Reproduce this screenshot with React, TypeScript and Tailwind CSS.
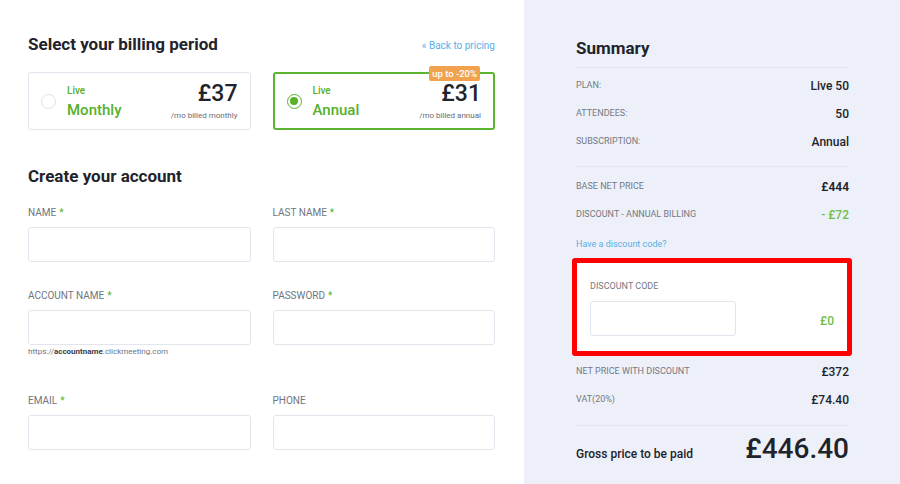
import React from 'react';

const green = 'text-[#56b02a]';

function Radio({ checked }: { checked?: boolean }) {
  return checked ? (
    <div className="w-[15px] h-[15px] rounded-full border-[1.5px] border-[#56b02a] flex items-center justify-center shrink-0">
      <div className="w-[8px] h-[8px] rounded-full bg-[#56b02a]" />
    </div>
  ) : (
    <div className="w-[15px] h-[15px] rounded-full border border-[#dfe2ea] shrink-0" />
  );
}

function PlanCard({ title, price, note, active }: { title: string; price: string; note: string; active?: boolean }) {
  return (
    <div
      className={`relative h-[58px] rounded-[3px] flex items-center pl-[12px] pr-[12px] ${
        active ? 'border-2 border-[#5bb530] pl-[11px] pr-[11px]' : 'border border-[#e3e5ee]'
      }`}
    >
      {active && (
        <div className="absolute top-[-8px] right-[13px] h-[15px] px-[3px] rounded-[2px] bg-[#f0a24e] text-white text-[9.5px] font-medium leading-[15px]">
          up to -20%
        </div>
      )}
      <Radio checked={active} />
      <div className="ml-[11px] pt-[2px] flex flex-col">
        <span className={`text-[10px] font-medium leading-[12px] ${green}`}>Live</span>
        <span className={`text-[15px] font-medium leading-[18px] mt-[4px] ${green}`}>{title}</span>
      </div>
      <div className="ml-auto flex flex-col items-end">
        <span className="text-[23px] font-medium leading-[26px] text-[#1f232b]">{price}</span>
        <span className="text-[8px] leading-[10px] text-[#666c77] mt-[4px]">{note}</span>
      </div>
    </div>
  );
}

function Field({ label, required, hint }: { label: string; required?: boolean; hint?: boolean }) {
  return (
    <div className="flex flex-col">
      <label className="text-[10px] leading-[14px] text-[#6f7580] uppercase">
        {label}
        {required && <span className="text-[#56b02a] ml-[3px]">*</span>}
      </label>
      <div className="mt-[7px] h-[35px] rounded-[3px] border border-[#e3e5ee] bg-white" />
      {hint && (
        <div className="h-[22px] pt-[2px] text-[8px] leading-[10px] text-[#6b7486]">
          https://<span className="font-bold text-[#3b404a]">accountname</span>.clickmeeting.com
        </div>
      )}
    </div>
  );
}

function Row({ label, value, valueClass }: { label: string; value: string; valueClass?: string }) {
  return (
    <div className="h-[28px] flex items-center justify-between">
      <span className="text-[9px] text-[#737985] uppercase">{label}</span>
      <span className={`text-[12px] font-medium ${valueClass ?? 'text-[#1f232b]'}`}>{value}</span>
    </div>
  );
}

export default function App() {
  return (
    <div className="w-[900px] h-[484px] flex bg-white overflow-hidden" style={{ fontFamily: 'Roboto, "Liberation Sans", sans-serif' }}>
      <div className="w-[524px] pl-[28px] pr-[29px] pt-[34px]">
        <div className="h-[22px] flex items-center justify-between">
          <h1 className="text-[17px] font-bold text-[#1f232b]">Select your billing period</h1>
          <a className="text-[10px] text-[#5aaee8]">« Back to pricing</a>
        </div>
        <div className="mt-[16px] grid grid-cols-2 gap-x-[22px]">
          <PlanCard title="Monthly" price="£37" note="/mo billed monthly" />
          <PlanCard title="Annual" price="£31" note="/mo billed annual" active />
        </div>
        <h2 className="mt-[36px] h-[22px] flex items-center text-[17px] font-bold text-[#1f232b]">Create your account</h2>
        <div className="mt-[18px] grid grid-cols-2 gap-x-[22px] gap-y-[27px] items-start">
          <Field label="Name" required />
          <Field label="Last name" required />
          <Field label="Account name" required hint />
          <Field label="Password" required />
          <Field label="Email" required />
          <Field label="Phone" />
        </div>
      </div>

      <div className="flex-1 bg-[#edf0f8] pl-[52px] pr-[51px] pt-[38px]">
        <div className="pb-[7px] border-b border-[#e2e5ee]">
          <h2 className="h-[22px] flex items-center text-[17px] font-bold text-[#1f232b]">Summary</h2>
        </div>
        <div className="mt-[4px] pb-[10px] border-b border-[#e2e5ee]">
          <Row label="Plan:" value="Live 50" />
          <Row label="Attendees:" value="50" />
          <Row label="Subscription:" value="Annual" />
        </div>
        <div className="mt-[6px]">
          <Row label="Base net price" value="£444" valueClass="text-[#1f232b] font-semibold" />
          <Row label="Discount - annual billing" value="- £72" valueClass="text-[#6cc04a]" />
        </div>
        <div className="mt-[9px] text-[9px] leading-[12px] text-[#5aaee8]">Have a discount code?</div>
        <div className="mt-[8px] -ml-[4px] -mr-[3px] border-[5px] border-[#ff0000] rounded-[3px] bg-white pl-[13px] pr-[13px] pt-[17px] pb-[15px]">
          <div className="text-[9px] leading-[12px] text-[#737985] uppercase">Discount code</div>
          <div className="mt-[9px] flex items-end justify-between">
            <div className="w-[146px] h-[35px] rounded-[3px] border border-[#e3e5ee] bg-white" />
            <span className="text-[12px] font-medium text-[#6cc04a] mb-[6px]">£0</span>
          </div>
        </div>
        <div className="mt-[2px] pb-[11px] border-b border-[#e2e5ee]">
          <Row label="Net price with discount" value="£372" />
          <Row label="VAT(20%)" value="£74.40" />
        </div>
        <div className="mt-[6px] flex items-baseline justify-between">
          <span className="text-[12px] font-medium text-[#1f232b]">Gross price to be paid</span>
          <span className="text-[28px] font-medium leading-[34px] text-[#1f232b]">£446.40</span>
        </div>
      </div>
    </div>
  );
}
